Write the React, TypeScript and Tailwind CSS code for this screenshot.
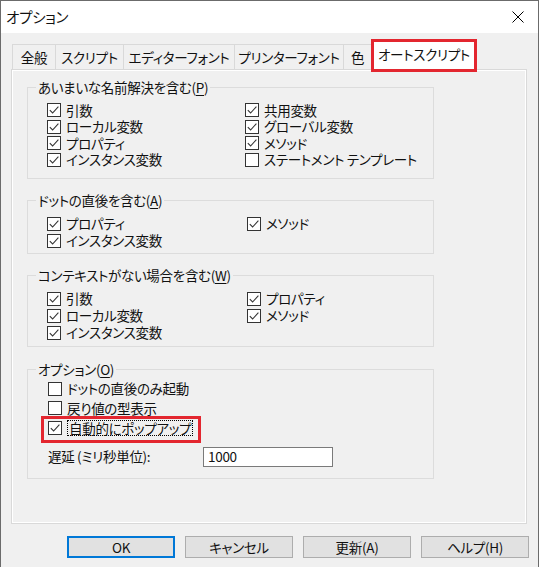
import React from "react";

const F = "font-['Noto_Sans_CJK_JP',sans-serif] [font-feature-settings:'palt']";

function Check({ checked }: { checked: boolean }) {
  return (
    <span className="flex h-[14px] w-[14px] shrink-0 items-center justify-center border border-[#333333] bg-white">
      {checked && (
        <svg width="12" height="12" viewBox="0 0 12 12">
          <path d="M1.8 6.2 L4.6 9 L10.4 2.6" fill="none" stroke="#333333" strokeWidth="1.1" />
        </svg>
      )}
    </span>
  );
}

function Item({ label, checked, h }: { label: string; checked: boolean; h: string }) {
  return (
    <div className={`flex items-center gap-[5px] ${h}`}>
      <Check checked={checked} />
      <span className="leading-none">{label}</span>
    </div>
  );
}

function Group({
  legend,
  mnemonic,
  className,
  children,
}: {
  legend: string;
  mnemonic: string;
  className: string;
  children: React.ReactNode;
}) {
  return (
    <fieldset className={`ml-[15px] w-[407px] border border-[#dcdcdc] ${className}`}>
      <legend className="ml-[8px] px-[2px] leading-[17px]">
        {legend}(<span className="underline underline-offset-2">{mnemonic}</span>)
      </legend>
      {children}
    </fieldset>
  );
}

const tabs = [
  { label: "全般", w: "w-[43px]" },
  { label: "スクリプト", w: "w-[68px]" },
  { label: "エディターフォント", w: "w-[111px]" },
  { label: "プリンターフォント", w: "w-[109px]" },
  { label: "色", w: "w-[29px]" },
];

export default function App() {
  return (
    <div className={`${F} h-[567px] w-[539px] overflow-hidden border-l border-r border-t border-[#6b6b6b] bg-[#f0f0f0] text-[13.5px] tracking-[-0.3px] text-[#111111]`}>
      {/* title bar */}
      <div className="flex h-[32px] items-center justify-between bg-white pl-[5px] pr-[14px]">
        <span className="text-[14.5px]">オプション</span>
        <svg width="12" height="12" viewBox="0 0 12 12">
          <path d="M0.5 0.5 L11.5 11.5 M11.5 0.5 L0.5 11.5" stroke="#000" strokeWidth="1" fill="none" />
        </svg>
      </div>

      <div className="pl-[10px] pt-[7px]">
        {/* tab row */}
        <div className="relative z-10 flex h-[29px] items-end pl-[1px]">
          {tabs.map((t, i) => (
            <div
              key={t.label}
              className={`flex h-[25px] ${t.w} items-center justify-center border-l border-t border-[#d9d9d9] bg-[#f0f0f0] ${i === tabs.length - 1 ? "border-r" : ""}`}
            >
              {t.label}
            </div>
          ))}
          <div className="relative -mb-[1px] flex h-[30px] w-[104px] items-center justify-center border-l border-r border-t border-[#d9d9d9] bg-white pb-[2px]">
            オートスクリプト
            <span className="pointer-events-none absolute -bottom-[2px] -left-[2px] -right-[2px] -top-[2px] border-[3px] border-[#e3262f]" />
          </div>
        </div>

        {/* panel */}
        <div className="h-[455px] w-[516px] border border-[#d9d9d9] bg-[#f0f0f0] shadow-[inset_1px_1px_0_#ffffff,inset_-1px_-1px_0_#ffffff]">
          <Group legend="あいまいな名前解決を含む" mnemonic="P" className="mt-[9px]">
            <div className="grid grid-cols-[198px_1fr] pb-[10px] pl-[19px] pt-[6px]">
              <Item label="引数" checked h="h-[16.5px]" />
              <Item label="共用変数" checked h="h-[16.5px]" />
              <Item label="ローカル変数" checked h="h-[16.5px]" />
              <Item label="グローバル変数" checked h="h-[16.5px]" />
              <Item label="プロパティ" checked h="h-[16.5px]" />
              <Item label="メソッド" checked h="h-[16.5px]" />
              <Item label="インスタンス変数" checked h="h-[16.5px]" />
              <Item label="ステートメント テンプレート" checked={false} h="h-[16.5px]" />
            </div>
          </Group>

          <Group legend="ドットの直後を含む" mnemonic="A" className="mt-[13px]">
            <div className="grid grid-cols-[200px_1fr] pb-[4px] pl-[19px] pt-[6px]">
              <Item label="プロパティ" checked h="h-[17px]" />
              <Item label="メソッド" checked h="h-[17px]" />
              <Item label="インスタンス変数" checked h="h-[17px]" />
            </div>
          </Group>

          <Group legend="コンテキストがない場合を含む" mnemonic="W" className="mt-[13px]">
            <div className="grid grid-cols-[200px_1fr] pb-[5px] pl-[19px] pt-[6px]">
              <Item label="引数" checked h="h-[17px]" />
              <Item label="プロパティ" checked h="h-[17px]" />
              <Item label="ローカル変数" checked h="h-[17px]" />
              <Item label="メソッド" checked h="h-[17px]" />
              <Item label="インスタンス変数" checked h="h-[17px]" />
            </div>
          </Group>

          <Group legend="オプション" mnemonic="O" className="mt-[14px]">
            <div className="pb-[11px] pl-[20px] pt-[1px]">
              <Item label="ドットの直後のみ起動" checked={false} h="h-[19.5px]" />
              <Item label="戻り値の型表示" checked={false} h="h-[19.5px]" />
              <div className="relative flex h-[19.5px] w-fit items-center gap-[5px]">
                <Check checked />
                <span className="border border-dotted border-black px-[1px] leading-[14px]">自動的にポップアップ</span>
                <span className="pointer-events-none absolute -bottom-[5px] -left-[7px] -right-[8px] -top-[2.5px] border-[3px] border-[#e3262f]" />
              </div>
              <div className="mt-[9px] flex h-[20px] items-center">
                <span className="w-[155px]">遅延 (ミリ秒単位):</span>
                <div className="flex h-[20px] w-[130px] items-center border border-[#7a7a7a] bg-white pl-[4px]">
                  1000
                </div>
              </div>
            </div>
          </Group>
        </div>

        {/* buttons */}
        <div className="mt-[12px] flex gap-[10px] pl-[56px]">
          <button className="flex h-[22px] w-[108px] items-center justify-center border-2 border-[#0078d7] bg-[#e1e1e1]">
            OK
          </button>
          <button className="flex h-[22px] w-[108px] items-center justify-center border border-[#adadad] bg-[#e1e1e1]">
            キャンセル
          </button>
          <button className="flex h-[22px] w-[108px] items-center justify-center border border-[#adadad] bg-[#e1e1e1]">
            更新(A)
          </button>
          <button className="flex h-[22px] w-[108px] items-center justify-center border border-[#adadad] bg-[#e1e1e1]">
            ヘルプ(H)
          </button>
        </div>
      </div>
    </div>
  );
}
